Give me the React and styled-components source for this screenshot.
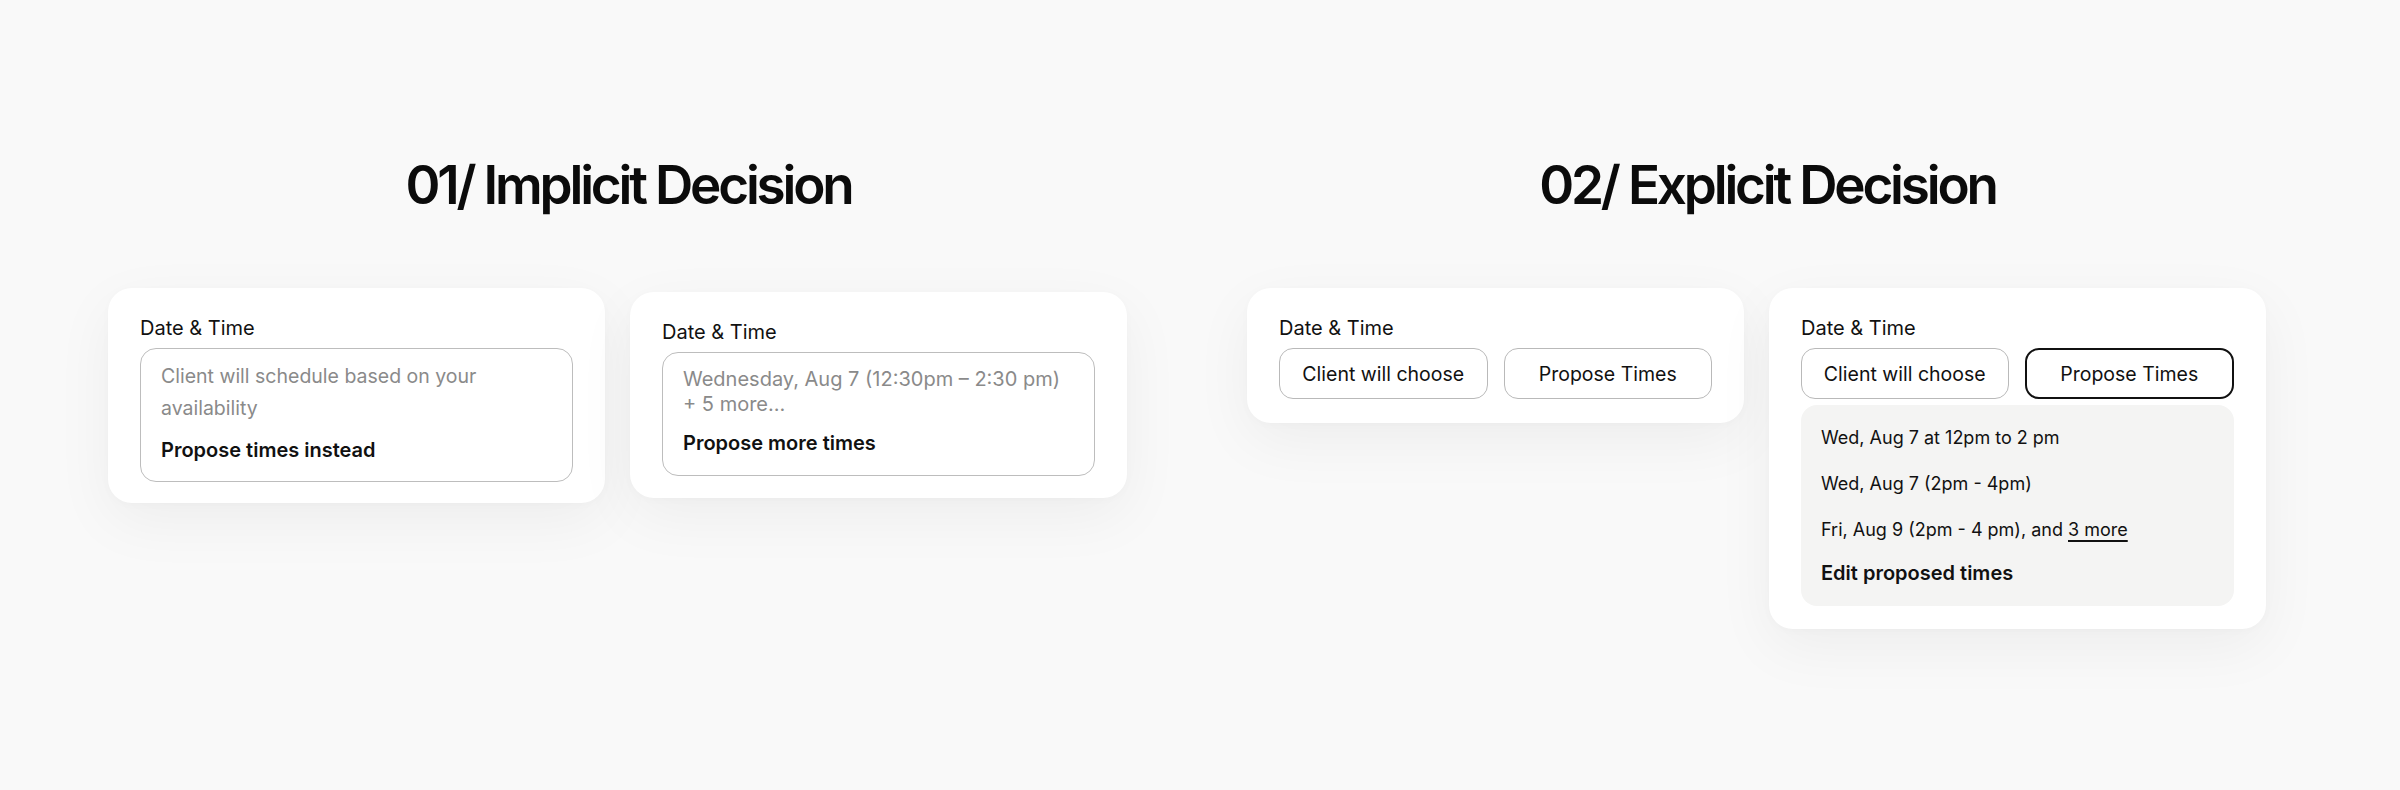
import React from "react";
import styled, { createGlobalStyle } from "styled-components";

const GlobalStyle = createGlobalStyle`
  html, body {
    margin: 0;
    padding: 0;
    background: #f9f9f9;
  }
  body {
    font-family: Inter, "Noto Sans", sans-serif;
    color: #111;
  }
`;

const Page = styled.main`
  width: 2400px;
  height: 790px;
  box-sizing: border-box;
  display: flex;
  align-items: flex-start;
  gap: 120px;
  padding: 152px 0 0 108px;
`;

const Section = styled.section`
  display: flex;
  flex-direction: column;
`;

const Title = styled.h2`
  margin: 0 0 70px;
  padding-left: 22px;
  text-align: center;
  font-family: Inter, sans-serif;
  font-weight: 600;
  font-size: 53px;
  line-height: 66px;
  letter-spacing: -0.06em;
  color: #0b0b0b;
`;

const CardRow = styled.div`
  display: flex;
  align-items: flex-start;
  gap: 25px;
`;

const Card = styled.div`
  width: 497px;
  box-sizing: border-box;
  background: #fff;
  border-radius: 24px;
  padding: 26px 32px ${(p) => p.$bottom || 21}px;
  margin-top: ${(p) => p.$offset || 0}px;
  box-shadow: 0 18px 60px rgba(0, 0, 0, 0.05), 0 2px 10px rgba(0, 0, 0, 0.02);
`;

const Label = styled.div`
  font-size: 20px;
  line-height: 28px;
  color: #111;
  margin-bottom: 6px;
`;

const InfoBox = styled.div`
  border: 1px solid #bdbdbd;
  border-radius: 16px;
  padding: ${(p) => p.$pad};
  display: flex;
  flex-direction: column;
`;

const Muted = styled.div`
  font-size: ${(p) => p.$size}px;
  line-height: ${(p) => p.$lh}px;
  color: #8a8a8a;
`;

const Action = styled.div`
  font-size: 20px;
  font-weight: 600;
  line-height: 26px;
  color: #111;
  margin-top: ${(p) => p.$gap}px;
`;

const ToggleRow = styled.div`
  display: flex;
  gap: 16px;
`;

const Toggle = styled.button`
  flex: 1;
  height: 51px;
  box-sizing: border-box;
  border-radius: 14px;
  background: #fff;
  border: ${(p) => (p.$active ? "2px solid #111" : "1px solid #b9b9b9")};
  font-family: Inter, sans-serif;
  font-size: 19.5px;
  color: #111;
  padding: 0;
`;

const TimesPanel = styled.div`
  margin-top: 6px;
  background: #f4f4f3;
  border-radius: 16px;
  padding: 10px 20px 20px;
  display: flex;
  flex-direction: column;
`;

const TimeItem = styled.div`
  font-size: 18px;
  line-height: 46px;
  color: #111;
`;

const MoreLink = styled.span`
  text-decoration: underline;
  text-underline-offset: 4px;
  text-decoration-thickness: 1.5px;
`;

export default function App() {
  return (
    <>
      <GlobalStyle />
      <Page>
        <Section>
          <Title>01/ Implicit Decision</Title>
          <CardRow>
            <Card>
              <Label>Date &amp; Time</Label>
              <InfoBox $pad="11px 20px 18px">
                <Muted $size={19.5} $lh={32}>
                  Client will schedule based on your
                  <br />
                  availability
                </Muted>
                <Action $gap={13}>Propose times instead</Action>
              </InfoBox>
            </Card>
            <Card $offset={4} $bottom={22}>
              <Label>Date &amp; Time</Label>
              <InfoBox $pad="14px 20px 19px">
                <Muted $size={20} $lh={25}>
                  Wednesday, Aug 7 (12:30pm – 2:30 pm)
                  <br />+ 5 more…
                </Muted>
                <Action $gap={13}>Propose more times</Action>
              </InfoBox>
            </Card>
          </CardRow>
        </Section>

        <Section>
          <Title>02/ Explicit Decision</Title>
          <CardRow>
            <Card $bottom={24}>
              <Label>Date &amp; Time</Label>
              <ToggleRow>
                <Toggle>Client will choose</Toggle>
                <Toggle>Propose Times</Toggle>
              </ToggleRow>
            </Card>
            <Card $bottom={23}>
              <Label>Date &amp; Time</Label>
              <ToggleRow>
                <Toggle>Client will choose</Toggle>
                <Toggle $active>Propose Times</Toggle>
              </ToggleRow>
              <TimesPanel>
                <TimeItem>Wed, Aug 7 at 12pm to 2 pm</TimeItem>
                <TimeItem>Wed, Aug 7 (2pm - 4pm)</TimeItem>
                <TimeItem>
                  Fri, Aug 9 (2pm - 4 pm), and <MoreLink>3 more</MoreLink>
                </TimeItem>
                <Action $gap={7}>Edit proposed times</Action>
              </TimesPanel>
            </Card>
          </CardRow>
        </Section>
      </Page>
    </>
  );
}
